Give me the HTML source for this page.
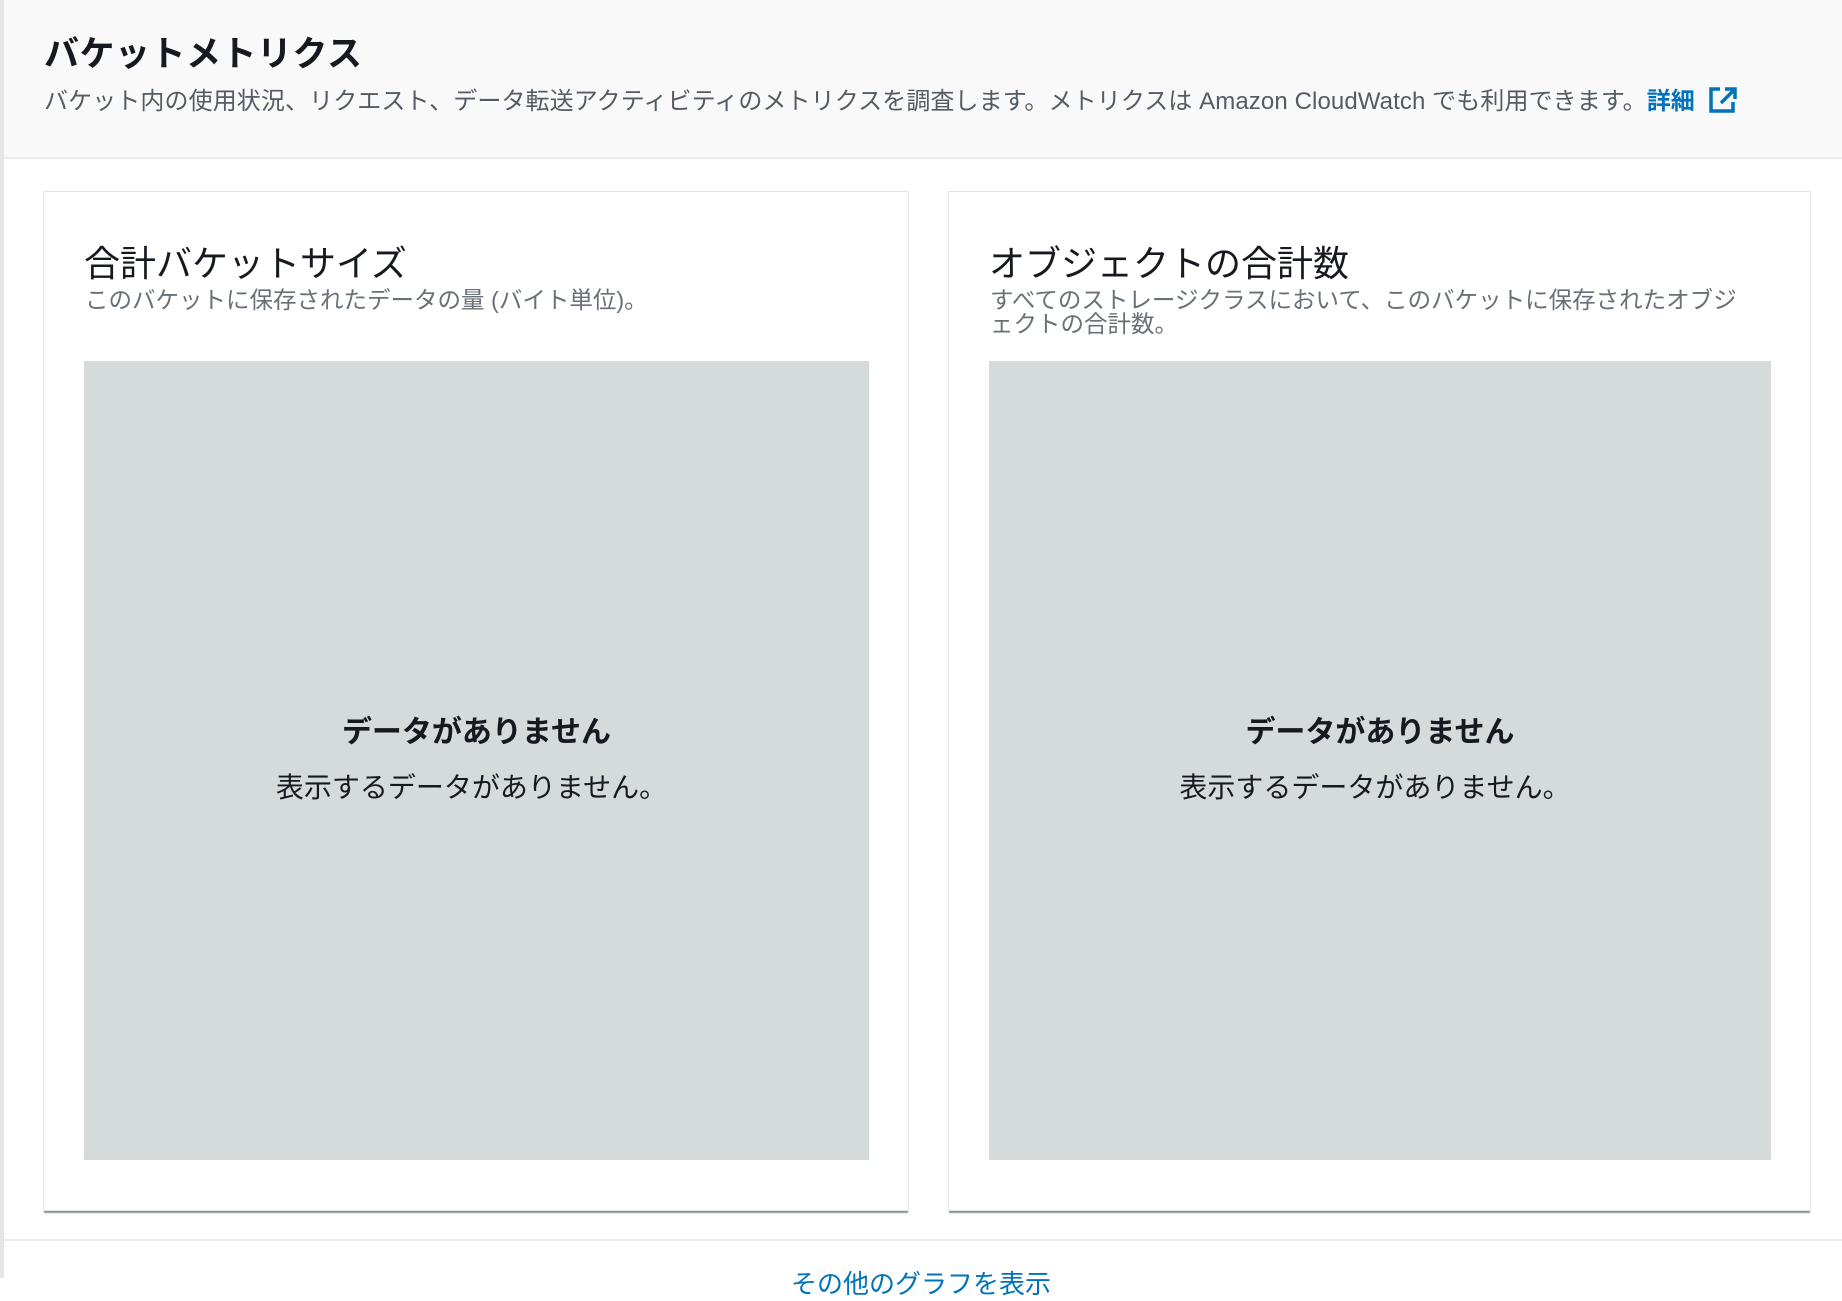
<!DOCTYPE html>
<html><head><meta charset="utf-8"><style>
*{margin:0;padding:0;box-sizing:border-box}
body{width:1842px;height:1278px;overflow:hidden;background:#fff;font-family:"Liberation Sans","Noto Sans CJK JP",sans-serif;position:relative}
.lb{position:absolute;left:0;top:0;width:4px;height:1278px;background:#e6e6e6}
.hdr{position:absolute;left:4px;top:0;width:1838px;height:159px;background:#f9f9f9;border-bottom:2px solid #eaeded}
.h1{position:absolute;left:40px;top:26px;font-size:35px;font-weight:bold;color:#16191f;letter-spacing:0.5px}
.desc{position:absolute;left:40px;top:81px;font-size:24px;color:#545b64;white-space:nowrap;letter-spacing:0.1px}
.desc a{color:#0073bb;font-weight:bold;text-decoration:none}
.card{position:absolute;top:191px;height:1020px;background:#fff;border:1px solid #e2e5e5;box-shadow:0 3px 1px -1px #879596}
.ct{position:absolute;left:40px;top:43px;font-size:36px;color:#16191f}
.cs{position:absolute;left:41px;top:96px;font-size:23.5px;line-height:24px;color:#687078;width:770px}
.gray{position:absolute;left:40px;top:169px;height:799px;background:#d5dbdb}
.nd{position:absolute;left:0;right:0;top:346px;text-align:center;font-size:30px;font-weight:bold;color:#16191f}
.nd2{position:absolute;left:-10px;right:0;top:405px;text-align:center;font-size:28px;color:#16191f}
.bl{position:absolute;left:4px;top:1239px;width:1838px;height:2px;background:#eaeded}
.more{position:absolute;left:0;width:1842px;top:1264px;text-align:center;font-size:26px;color:#0073bb}
</style></head><body>
<div class="lb"></div>
<div class="hdr">
<div class="h1">バケットメトリクス</div>
<div class="desc">バケット内の使用状況、リクエスト、データ転送アクティビティのメトリクスを調査します。メトリクスは Amazon CloudWatch でも利用できます。<a>詳細 <svg width="30" height="28" viewBox="0 0 30 28" style="vertical-align:-5px;margin-left:6px"><path d="M12 3H3v22h22v-9" fill="none" stroke="#0073bb" stroke-width="3.5"/><path d="M17 3h10v10M27 3L13 17" fill="none" stroke="#0073bb" stroke-width="3.5"/></svg></a></div>
</div>
<div class="card" style="left:43px;width:866px">
<div class="ct">合計バケットサイズ</div>
<div class="cs">このバケットに保存されたデータの量 (バイト単位)。</div>
<div class="gray" style="width:785px"><div class="nd">データがありません</div><div class="nd2">表示するデータがありません。</div></div>
</div>
<div class="card" style="left:948px;width:863px">
<div class="ct">オブジェクトの合計数</div>
<div class="cs">すべてのストレージクラスにおいて、このバケットに保存されたオブジェクトの合計数。</div>
<div class="gray" style="width:782px"><div class="nd">データがありません</div><div class="nd2">表示するデータがありません。</div></div>
</div>
<div class="bl"></div>
<div class="more">その他のグラフを表示</div>
</body></html>
